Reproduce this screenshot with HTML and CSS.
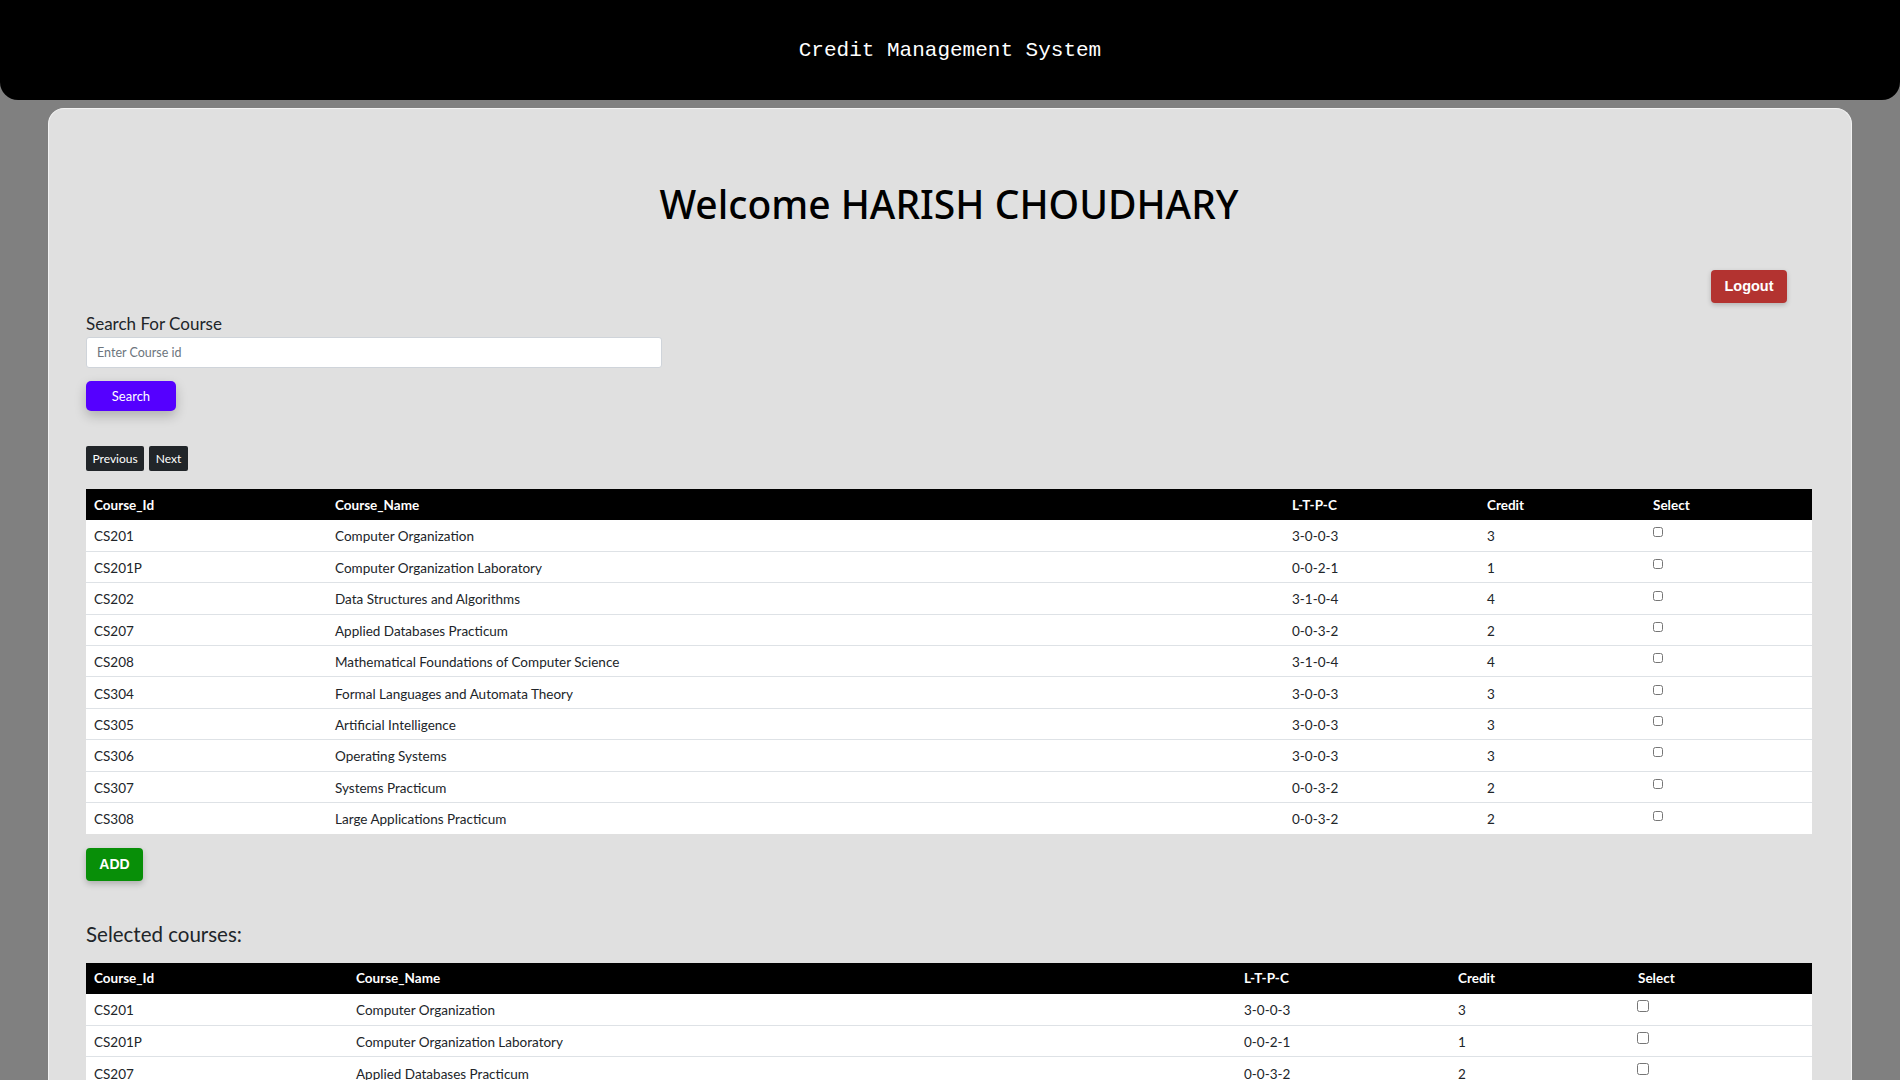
FILE: index.html
```html
<!DOCTYPE html>
<html>
<head>
<meta charset="utf-8">
<title>Credit Management System</title>
<link rel="stylesheet" href="styles.css">
</head>
<body>
<header class="topbar">
  <div class="brand">Credit Management System</div>
</header>
<main class="card">
  <h1 class="welcome">Welcome HARISH CHOUDHARY</h1>
  <div class="logout-row">
    <button class="btn-logout">Logout</button>
  </div>
  <div class="search">
    <label class="search-label" for="cid">Search For Course</label>
    <input id="cid" class="search-input" type="text" placeholder="Enter Course id">
    <button class="btn-search">Search</button>
  </div>
  <div class="pager">
    <button class="btn-page">Previous</button>
    <button class="btn-page">Next</button>
  </div>
  <table class="tbl tbl-all">
    <colgroup>
      <col class="c1"><col class="c2"><col class="c3"><col class="c4"><col class="c5">
    </colgroup>
    <thead>
      <tr><th>Course_Id</th><th>Course_Name</th><th>L-T-P-C</th><th>Credit</th><th>Select</th></tr>
    </thead>
    <tbody>
      <tr><td>CS201</td><td>Computer Organization</td><td>3-0-0-3</td><td>3</td><td><input type="checkbox" class="chk"></td></tr>
      <tr><td>CS201P</td><td>Computer Organization Laboratory</td><td>0-0-2-1</td><td>1</td><td><input type="checkbox" class="chk"></td></tr>
      <tr><td>CS202</td><td>Data Structures and Algorithms</td><td>3-1-0-4</td><td>4</td><td><input type="checkbox" class="chk"></td></tr>
      <tr><td>CS207</td><td>Applied Databases Practicum</td><td>0-0-3-2</td><td>2</td><td><input type="checkbox" class="chk"></td></tr>
      <tr><td>CS208</td><td>Mathematical Foundations of Computer Science</td><td>3-1-0-4</td><td>4</td><td><input type="checkbox" class="chk"></td></tr>
      <tr><td>CS304</td><td>Formal Languages and Automata Theory</td><td>3-0-0-3</td><td>3</td><td><input type="checkbox" class="chk"></td></tr>
      <tr><td>CS305</td><td>Artificial Intelligence</td><td>3-0-0-3</td><td>3</td><td><input type="checkbox" class="chk"></td></tr>
      <tr><td>CS306</td><td>Operating Systems</td><td>3-0-0-3</td><td>3</td><td><input type="checkbox" class="chk"></td></tr>
      <tr><td>CS307</td><td>Systems Practicum</td><td>0-0-3-2</td><td>2</td><td><input type="checkbox" class="chk"></td></tr>
      <tr><td>CS308</td><td>Large Applications Practicum</td><td>0-0-3-2</td><td>2</td><td><input type="checkbox" class="chk"></td></tr>
    </tbody>
  </table>
  <button class="btn-add">ADD</button>
  <h2 class="selected-title">Selected courses:</h2>
  <table class="tbl tbl-sel">
    <colgroup>
      <col class="s1"><col class="s2"><col class="s3"><col class="s4"><col class="s5">
    </colgroup>
    <thead>
      <tr><th>Course_Id</th><th>Course_Name</th><th>L-T-P-C</th><th>Credit</th><th>Select</th></tr>
    </thead>
    <tbody>
      <tr><td>CS201</td><td>Computer Organization</td><td>3-0-0-3</td><td>3</td><td><input type="checkbox" class="chk chk-lg"></td></tr>
      <tr><td>CS201P</td><td>Computer Organization Laboratory</td><td>0-0-2-1</td><td>1</td><td><input type="checkbox" class="chk chk-lg"></td></tr>
      <tr><td>CS207</td><td>Applied Databases Practicum</td><td>0-0-3-2</td><td>2</td><td><input type="checkbox" class="chk chk-lg"></td></tr>
    </tbody>
  </table>
</main>
</body>
</html>
```

FILE: styles.css
```css
* { box-sizing: border-box; }

html, body {
  margin: 0;
  padding: 0;
  background: #808080;
  font-family: Lato, "Open Sans", sans-serif;
  color: #212529;
}

.topbar {
  height: 100px;
  background: #000;
  border-radius: 0 0 18px 18px;
  display: flex;
  align-items: center;
  justify-content: center;
  padding-top: 1px;
}

.brand {
  font-family: "Liberation Mono", "Courier New", monospace;
  font-size: 21px;
  color: #fff;
}

.card {
  margin: 8px 48px 0;
  background: #e0e0e0;
  border: 1px solid #f2f2f2;
  border-bottom: none;
  border-radius: 16px 16px 0 0;
  padding: 69px 39px 40px 37px;
  min-height: 980px;
}

.welcome {
  margin: 0;
  text-align: center;
  font-family: "Noto Sans", sans-serif;
  font-weight: 500;
  font-size: 39px;
  line-height: 52px;
  color: #000;
}

.logout-row {
  display: flex;
  justify-content: flex-end;
  padding-right: 25px;
  margin-top: 40px;
}

.btn-logout {
  width: 76px;
  height: 33px;
  border: none;
  border-radius: 4px;
  background: #b33330;
  color: #fff;
  font-family: "Liberation Sans", Arial, sans-serif;
  font-weight: bold;
  font-size: 14.5px;
  box-shadow: 0 2px 5px rgba(0,0,0,0.2);
  padding: 0 0 2px;
}

.search {
  display: flex;
  flex-direction: column;
  align-items: flex-start;
  margin-top: 10px;
}

.search-label {
  font-size: 17px;
  line-height: 22px;
  color: #212529;
}

.search-input {
  margin-top: 2px;
  width: 576px;
  height: 31px;
  border: 1px solid #cfd4da;
  border-radius: 3px;
  background: #fff;
  padding: 0 10px;
  font-family: Lato, "Open Sans", sans-serif;
  font-size: 12.5px;
  color: #495057;
}

.search-input::placeholder { color: #6c757d; }

.btn-search {
  margin-top: 13px;
  width: 90px;
  height: 30px;
  border: none;
  border-radius: 5px;
  background: #5500ff;
  color: #fff;
  font-family: Lato, "Open Sans", sans-serif;
  font-size: 13px;
  box-shadow: 0 5px 12px rgba(0,0,0,0.22);
  padding: 0;
}

.pager {
  display: flex;
  gap: 5px;
  margin-top: 35px;
}

.btn-page {
  height: 25px;
  border: none;
  border-radius: 2px;
  background: #212529;
  color: #fff;
  font-family: Lato, "Open Sans", sans-serif;
  font-size: 12px;
  padding: 0 6.5px;
}

.tbl {
  width: 100%;
  border-collapse: collapse;
  table-layout: fixed;
  font-size: 13.5px;
  background: #fff;
  margin-top: 18px;
}

.tbl th {
  background: #000;
  color: #fff;
  text-align: left;
  font-weight: bold;
  height: 31px;
  padding: 0 8px;
  line-height: 18px;
}

.tbl td {
  padding: 2px 8px 0;
  height: 31.4px;
  line-height: 18px;
  border-top: 1px solid #dee2e6;
  color: #212529;
}

.tbl tbody tr:first-child td { border-top: none; }

.c1 { width: 241px; }
.c2 { width: 957px; }
.c3 { width: 195px; }
.c4 { width: 166px; }
.c5 { width: 167px; }

.s1 { width: 262px; }
.s2 { width: 888px; }
.s3 { width: 214px; }
.s4 { width: 180px; }
.s5 { width: 182px; }

.chk {
  width: 10px;
  height: 10px;
  margin: 0 0 9px 0;
  vertical-align: middle;
}

.chk-lg {
  width: 12px;
  height: 12px;
  margin-left: -1px;
}

.btn-add {
  display: block;
  margin-top: 14px;
  width: 57px;
  height: 33px;
  border: none;
  border-radius: 4px;
  background: #088f08;
  color: #fff;
  font-family: "Liberation Sans", Arial, sans-serif;
  font-weight: bold;
  font-size: 14px;
  box-shadow: 0 3px 6px rgba(0,0,0,0.22);
  padding: 0;
}

.selected-title {
  margin: 39px 0 0;
  font-size: 20.5px;
  line-height: 28px;
  font-weight: normal;
  color: #212529;
}

.tbl-sel { margin-top: 15px; }
```
